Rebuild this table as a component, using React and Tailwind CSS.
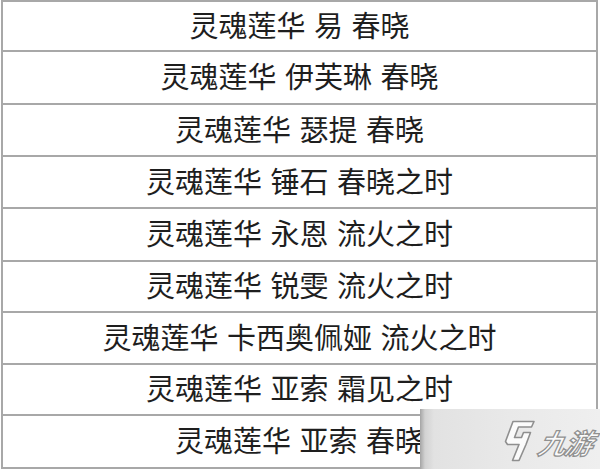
import React from 'react';

const rows = [
  { text: '灵魂莲华 易 春晓', h: 'h-[50px]' },
  { text: '灵魂莲华 伊芙琳 春晓', h: 'h-[53px]' },
  { text: '灵魂莲华 瑟提 春晓', h: 'h-[52px]' },
  { text: '灵魂莲华 锤石 春晓之时', h: 'h-[52px]' },
  { text: '灵魂莲华 永恩 流火之时', h: 'h-[53px]' },
  { text: '灵魂莲华 锐雯 流火之时', h: 'h-[51px]' },
  { text: '灵魂莲华 卡西奥佩娅 流火之时', h: 'h-[52px]' },
  { text: '灵魂莲华 亚索 霜见之时', h: 'h-[51px]' },
  { text: '灵魂莲华 亚索 春晓', h: 'h-[55px] border-b-2' },
];

// 九游 watermark in the corner
const Watermark = () => (
  <div className="absolute right-0 bottom-0 w-[180px] h-[60px] flex items-center pl-[84px] gap-[3px] bg-[linear-gradient(90deg,#a4a4a4_0px,#d2d2d2_5px,#e2e2e2_14px,#e9e9e9_50%,#efefef_100%)]">
    <svg width="32" height="42" viewBox="0 0 32 42" className="shrink-0 mt-[4px]">
      <path
        d="M9 1.5 L30 1.5 L27.5 7 L14.5 7 L10.5 17.5 L17.5 17.5 L19.5 12.5 L26.5 12.5 L22 24.5 L15 40.5 L8.5 40.5 L15 24.5 L3.5 24.5 L1.5 21.5 Z"
        fill="#fbfbfb"
        stroke="#8f8f8f"
        strokeWidth="1.6"
        strokeLinejoin="round"
      />
    </svg>
    <span className="text-[28px] leading-none italic font-bold text-[#fbfbfb] [-webkit-text-stroke:1.3px_#919191] [font-family:'Noto_Sans_CJK_SC',sans-serif] -skew-x-12 mt-[6px] tracking-[-1.5px]">
      九游
    </span>
  </div>
);

export default function App() {
  return (
    <div className="relative w-[600px] h-[469px] overflow-hidden bg-white">
      <div className="ml-px w-[597px] border-x-2 border-[#a8a8a8]">
        {rows.map((r, i) => (
          <div
            key={i}
            className={`${r.h} border-t-2 border-[#a8a8a8] flex items-center justify-center pb-[4px]`}
          >
            <span className="text-[29px] leading-none text-[#1e1e1e] [word-spacing:2px] [font-family:'Noto_Sans_CJK_SC',sans-serif]">
              {r.text}
            </span>
          </div>
        ))}
      </div>
      <Watermark />
    </div>
  );
}
